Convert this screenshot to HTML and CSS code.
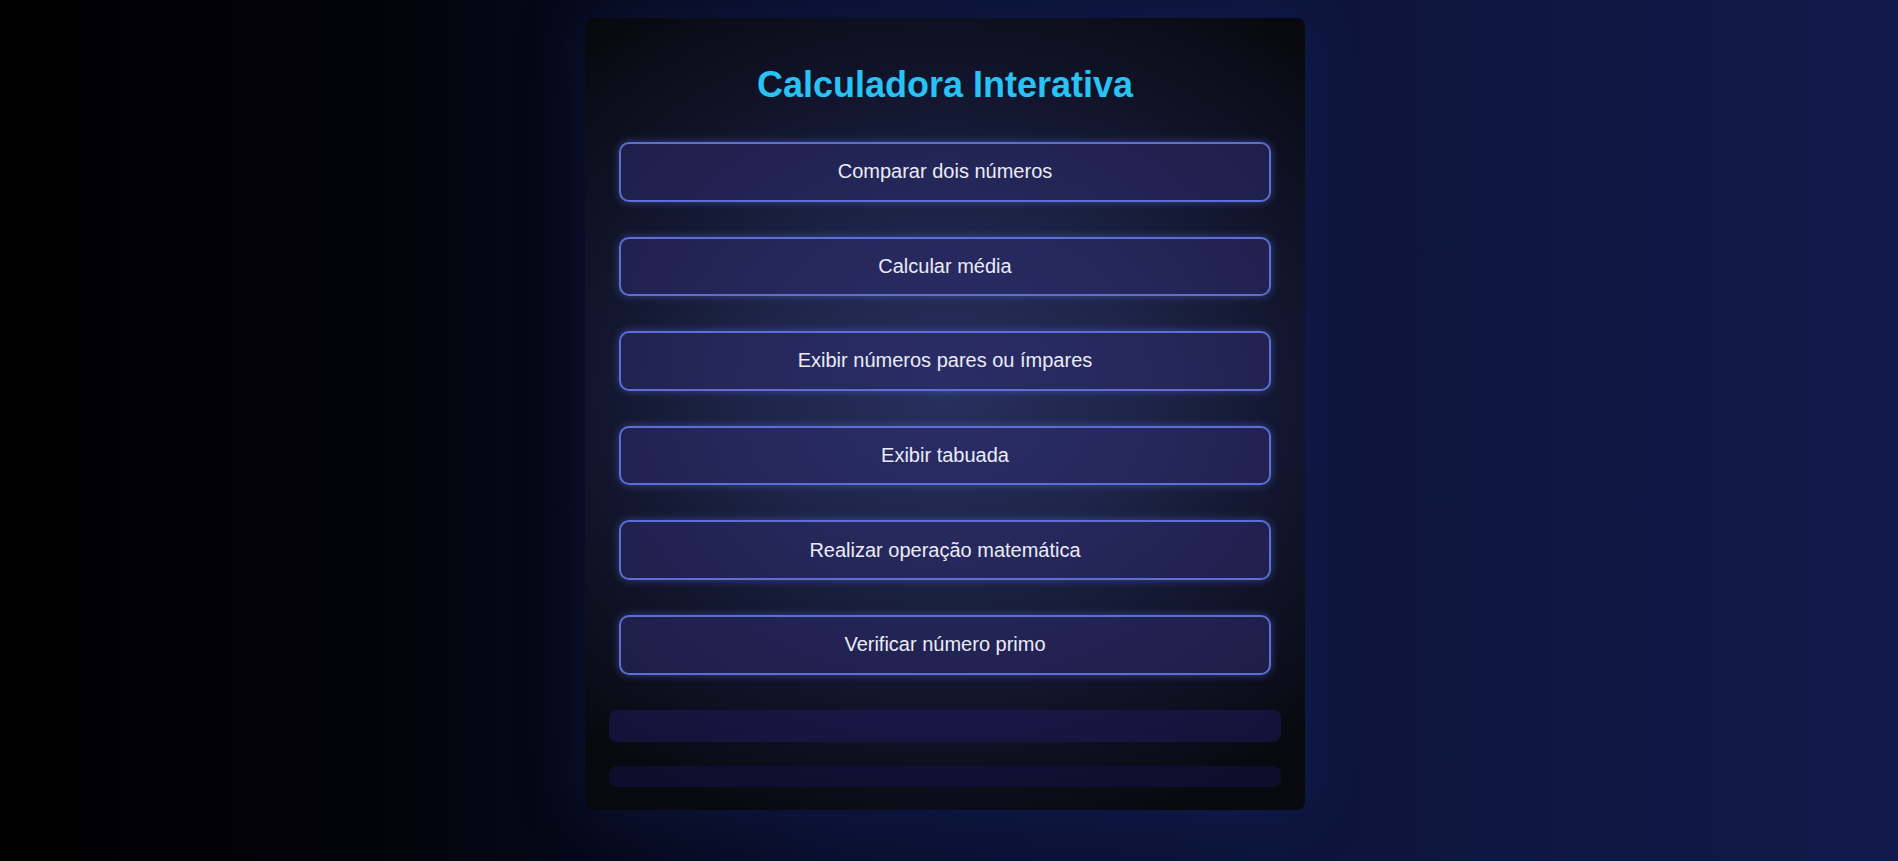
FILE: index.html
```html
<!DOCTYPE html>
<html lang="pt-BR">
<head>
<meta charset="utf-8">
<title>Calculadora Interativa</title>
<link rel="stylesheet" href="styles.css">
</head>
<body>
  <main class="card">
    <h1 class="title">Calculadora Interativa</h1>
    <div class="menu">
      <button class="btn">Comparar dois números</button>
      <button class="btn">Calcular média</button>
      <button class="btn">Exibir números pares ou ímpares</button>
      <button class="btn">Exibir tabuada</button>
      <button class="btn">Realizar operação matemática</button>
      <button class="btn">Verificar número primo</button>
    </div>
    <div class="result result-main"></div>
    <div class="result result-extra"></div>
  </main>
</body>
</html>
```

FILE: styles.css
```css
html, body {
  margin: 0;
  height: 100%;
}

body {
  box-sizing: border-box;
  padding: 18px 8px 0 0;
  background: linear-gradient(to right, #000000 0%, #03040c 22%, #0a1030 45%, #0c1438 65%, #111a4b 100%);
  font-family: "Liberation Sans", Arial, sans-serif;
  display: flex;
  justify-content: center;
  align-items: flex-start;
  overflow: hidden;
}

.card {
  width: 720px;
  box-sizing: border-box;
  padding: 24px 24px 23px;
  border-radius: 8px;
  background:
    radial-gradient(ellipse 75% 58% at 50% 47%, #27305e 0%, #1e2549 35%, #131730 62%, #08090f 100%);
  box-shadow: 0 0 70px rgba(30, 45, 130, 0.3);
  display: flex;
  flex-direction: column;
}

.title {
  margin: 22px 0 0;
  text-align: center;
  font-size: 36px;
  font-weight: bold;
  color: #28c2f5;
  line-height: normal;
}

.menu {
  margin: 36px 10px 0;
  display: flex;
  flex-direction: column;
  gap: 35px;
}

.btn {
  box-sizing: border-box;
  height: 59.6px;
  width: 100%;
  border: 2px solid #5c6fd6;
  border-radius: 10px;
  background: rgba(46, 44, 110, 0.55);
  box-shadow: 0 0 8px rgba(92, 111, 214, 0.5);
  color: #ebebf8;
  font-family: "Liberation Sans", Arial, sans-serif;
  font-size: 20px;
  line-height: 23px;
  padding: 0;
  text-align: center;
}

.result {
  border-radius: 8px;
}

.result-main {
  margin-top: 35px;
  height: 32px;
  background: rgba(30, 25, 95, 0.5);
}

.result-extra {
  margin-top: 24px;
  height: 21px;
  background: rgba(22, 16, 70, 0.55);
}
```
